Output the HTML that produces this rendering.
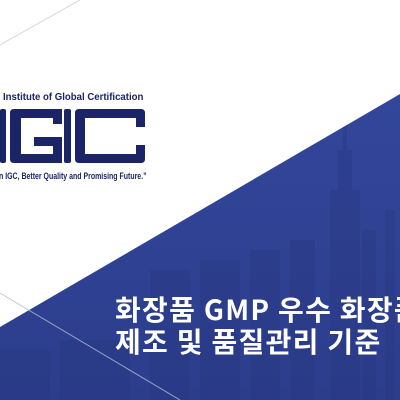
<!DOCTYPE html>
<html><head><meta charset="utf-8"><style>
html,body{margin:0;padding:0}
body{width:400px;height:400px;overflow:hidden;position:relative;background:#fff;font-family:"Liberation Sans",sans-serif}
.t{position:absolute;color:#1b2466;font-weight:bold;white-space:nowrap;transform-origin:0 0}
.k{position:absolute;left:115px;color:#fff;font-family:"Noto Sans CJK KR",sans-serif;font-weight:bold;font-size:28px;white-space:nowrap;line-height:32px;letter-spacing:1.3px}
</style></head><body>
<svg width="400" height="400" style="position:absolute;left:0;top:0">
<defs>
<linearGradient id="bg" x1="0" y1="0" x2="0" y2="1">
<stop offset="0" stop-color="#33469a"/><stop offset="1" stop-color="#2c3d8c"/>
</linearGradient>
<clipPath id="tri"><polygon points="400,94 400,400 0,400 0,327"/></clipPath>
</defs>
<line x1="0" y1="45" x2="80" y2="0" stroke="#d6d6d6" stroke-width="1"/>
<polygon points="400,94 400,400 0,400 0,327" fill="url(#bg)"/>
<g clip-path="url(#tri)" fill="#27377f" opacity="0.35">
<rect x="330" y="190" width="30" height="210"/>
<rect x="338" y="150" width="14" height="50"/>
<rect x="343" y="110" width="4" height="50"/>
<rect x="362" y="230" width="14" height="170"/>
<rect x="385" y="210" width="10" height="190"/>
<rect x="290" y="240" width="25" height="160"/>
<rect x="250" y="250" width="30" height="150"/>
<rect x="200" y="260" width="40" height="140"/>
<rect x="150" y="270" width="40" height="130"/>
<rect x="60" y="340" width="70" height="60"/>
<rect x="0" y="350" width="50" height="50"/>
</g>
<line x1="0" y1="293" x2="180" y2="400" stroke="#b8bcd0" stroke-width="1" opacity="0.8"/>
<g fill="#1b2466">
<rect x="0" y="109" width="6" height="54" rx="2"/>
<path d="M14 109 H62 V124 H53 V118 H21 V154 H53 V146 H34 V137 H62 V163 H14 Q10 163 10 159 V113 Q10 109 14 109 Z"/>
<rect x="64" y="109" width="7" height="54" rx="2"/>
<path d="M79 109 H141 Q145 109 145 113 V127 H136 V118 H85 V154 H136 V145 H145 V159 Q145 163 141 163 H79 Q75 163 75 159 V113 Q75 109 79 109 Z"/>
</g>
</svg>
<div class="t" style="left:3px;top:91px;font-size:10.5px;transform:scaleX(0.915)">Institute of Global Certification</div>
<div class="t" style="left:-1px;top:171px;font-size:9.3px;transform:scaleX(0.75)">n IGC, Better Quality and Promising Future.”</div>
<div class="k" style="top:293px">화장품 GMP 우수 화장품</div>
<div class="k" style="top:325px">제조 및 품질관리 기준</div>
</body></html>
